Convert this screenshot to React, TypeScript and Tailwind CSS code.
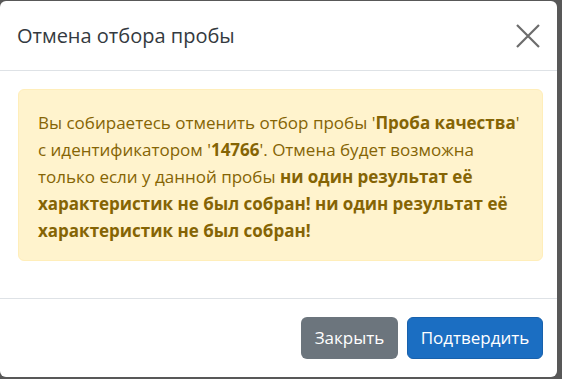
import * as React from 'react';

export default function App() {
  return (
    <div className="w-[562px] h-[379px] bg-[#585858] pt-[1px]" style={{ fontFamily: '"Open Sans", "Noto Sans", sans-serif' }}>
      <div className="w-[557px] h-[376px] bg-white rounded-[6px] flex flex-col">
        {/* Header */}
        <div className="h-[70px] border-b border-[#dee2e6] flex items-center justify-between pl-[17px] pr-[16px]">
          <h5 className="text-[20px] text-[#343a40] leading-none">Отмена отбора пробы</h5>
          <button className="w-[26px] h-[26px] flex items-center justify-center text-[#6c6c6c]">
            <svg width="24" height="24" viewBox="0 0 24 24" fill="none" stroke="currentColor" strokeWidth="2.2">
              <path d="M1 1L23 23M23 1L1 23" />
            </svg>
          </button>
        </div>

        {/* Body */}
        <div className="flex-1 pt-[18px] pl-[18px] pr-[14px]">
          <div className="bg-[#fff3cd] border border-[#ffeeba] rounded-[6px] px-[19px] pt-[19px] pb-[16px] text-[#856404] text-[17px] leading-[27px]">
            Вы собираетесь отменить отбор пробы '<b>Проба качества</b>' с идентификатором '<b>14766</b>'. Отмена
            будет возможна только если у данной пробы <b>ни один результат её характеристик не был собран! ни один
            результат её характеристик не был собран!</b>
          </div>
        </div>

        {/* Footer */}
        <div className="h-[79px] border-t border-[#dee2e6] flex items-center justify-end gap-[9px] pr-[14px] pb-[1px]">
          <button className="h-[42px] w-[97px] rounded-[6px] bg-[#6c757d] text-white text-[17px]">Закрыть</button>
          <button className="h-[42px] w-[136px] rounded-[6px] bg-[#1b6ec2] border border-[#1861ac] text-white text-[17px]">
            Подтвердить
          </button>
        </div>
      </div>
    </div>
  );
}
